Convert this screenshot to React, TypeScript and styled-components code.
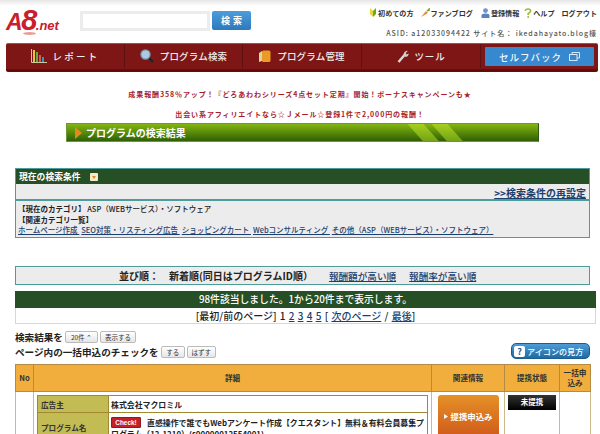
import React from "react";
import styled, { createGlobalStyle } from "styled-components";

const Global = createGlobalStyle`
  html, body { margin: 0; padding: 0; height: 434px; overflow: hidden; background: #fff; }
  body { font-family: "Noto Sans CJK JP", "Liberation Sans", sans-serif; color: #222; }
  * { box-sizing: border-box; }
  a { color: #1c3f6e; }
`;

const Page = styled.div`
  width: 600px; height: 434px; overflow: hidden;
  background: linear-gradient(#e6e6e6 0, #fff 6px);
`;
const Header = styled.header`
  display: flex; height: 43px; padding: 8px 3px 0 6px;
`;
const Logo = styled.div`
  position: relative; flex: none; width: 60px; height: 26px; display: flex; align-items: baseline; color: #c8202c;
  font-family: "Liberation Sans", sans-serif; font-style: italic; font-weight: 700; line-height: 24px; white-space: nowrap;
  &::after { content: ""; position: absolute; left: 17px; top: 24px; width: 13px; height: 3px; border-radius: 50%; background: #eb9c96; }
`;
const LogoPart = styled.span<{ $size: number; $shift: number }>`
  font-size: ${(p) => p.$size}px; letter-spacing: ${(p) => p.$shift}px;
`;
const SearchInput = styled.input`
  width: 130px; height: 20px; margin: 3px 0 0 14px; border: 3px solid #ececec; background: #fff; outline: none;
`;
const SearchButton = styled.button`
  width: 39px; height: 19px; margin: 3px 0 0 2px; border: 0; border-radius: 2px; color: #fff;
  background: linear-gradient(#4d9ddb, #2c79bb); font: 700 9px/19px "Noto Sans CJK JP", sans-serif; letter-spacing: 3px; padding: 0 0 0 3px;
`;
const HeaderInfo = styled.div`
  margin-left: auto; display: flex; flex-direction: column; align-items: flex-end;
`;
const TopLinks = styled.div`
  display: flex; height: 12px; margin-top: -1px; align-items: center;
`;
const TopLink = styled.span<{ $gap: number }>`
  display: flex; align-items: center; gap: 1px; margin-left: ${(p) => p.$gap}px; font-size: 7.1px; font-weight: 700; color: #333; line-height: 12px; white-space: nowrap;
`;
const Asid = styled.div`
  margin-top: 9px; font-size: 7px; line-height: 10px; letter-spacing: 0.96px; font-weight: 500; color: #555; white-space: nowrap;
`;
const Nav = styled.nav`
  display: grid; grid-template-columns: 119px 118px 119px 119px 1fr; height: 29px; margin: 0 2px 0 6px; border-radius: 2px;
  background: #7f1616; border-top: 1px solid #a45050; border-bottom: 3px solid #640c0c;
`;
const NavItem = styled.div<{ $spacing: number }>`
  display: flex; align-items: center; justify-content: center; gap: 6px; height: 24px; color: #eee; font-size: 9.5px; font-weight: 500;
  letter-spacing: ${(p) => p.$spacing}px; border-right: 1px solid #5f1010; white-space: nowrap;
`;
const SelfBack = styled.div`
  display: flex; align-items: center; justify-content: center; gap: 7px; height: 19px; margin: 3px 4px 0 4px; background: #3688cf; border-radius: 1px;
  color: #f2f6fa; font-size: 9.5px; font-weight: 500; letter-spacing: 1px; white-space: nowrap;
`;
const Notices = styled.div`
  display: flex; flex-direction: column; gap: 10px; padding-top: 17px; align-items: center;
`;
const Notice = styled.p`
  margin: 0; height: 10px; color: #a81c2a; font-size: 7px; line-height: 10px; font-weight: 700; letter-spacing: 0.9px; white-space: nowrap;
`;
const TitleBar = styled.h2`
  position: relative; overflow: hidden; display: flex; align-items: center; gap: 4px; width: 473px; height: 19px; margin: 4px 0 0 66px; padding-left: 8px;
  background: linear-gradient(#83b512, #2f6003); border: 1px solid #6a9a38; border-right-color: #2f5d10; color: #fff; font-size: 10px; line-height: 16px; font-weight: 700;
`;
const Stripe = styled.i<{ $left: number }>`
  position: absolute; top: 0; left: ${(p) => p.$left}px; width: 16px; height: 19px; background: linear-gradient(#a6d01c, #6d9e16); transform: skewX(42deg);
`;
const Panel = styled.section`
  margin: 26px 0 0 15px; width: 575px; border: 1px solid #4d9c9c; background: #ececec;
`;
const PanelHead = styled.div`
  display: flex; align-items: center; gap: 9px; height: 15px; padding-left: 3px; background: #264f25; color: #fff; font-size: 8.8px; font-weight: 700; line-height: 15px;
`;
const Reset = styled.div`
  height: 17px; padding-right: 3px; text-align: right; border-bottom: 2px solid #4d9c9c; font-size: 10px; line-height: 17px; font-weight: 700;
`;
const Cats = styled.div`
  height: 36px; padding: 3px 2px 0; font-size: 7.5px; line-height: 10.5px; font-weight: 500; white-space: nowrap;
  a { margin-right: 2px; }
  b { font-weight: 700; }
`;
const SortBox = styled.div`
  display: flex; align-items: center; height: 19px; width: 575px; margin: 28px 0 0 15px; padding-left: 103px; background: #ececec; border: 1px solid #4d9c9c;
  font-size: 10px; font-weight: 700; white-space: nowrap;
  a { margin-left: 16px; font-size: 9.6px; font-weight: 500; }
  a + a { margin-left: 13px; }
`;
const ResultBar = styled.div`
  height: 17px; width: 581px; margin: 6px 0 0 15px; background: #264f25; color: #fff; text-align: center; font-size: 9.8px; line-height: 17px; font-weight: 500;
`;
const Pager = styled.div`
  height: 16px; width: 581px; margin-left: 15px; border: 1px solid #c4dfe0; border-top: 0; text-align: center; font-size: 10px; line-height: 15px; font-weight: 500; white-space: nowrap;
  word-spacing: 1px;
`;
const ControlsRow = styled.div`
  display: flex; justify-content: space-between; width: 575px; margin: 6px 0 0 15px;
`;
const ControlLines = styled.div`
  display: flex; flex-direction: column; gap: 2px;
`;
const ControlLine = styled.div`
  display: flex; align-items: center; gap: 2px; height: 13px; font-size: 9.6px; font-weight: 700; white-space: nowrap;
`;
const MiniButton = styled.span<{ $w: number }>`
  display: inline-flex; align-items: center; justify-content: center; flex: none; width: ${(p) => p.$w}px; height: 12px;
  border: 1px solid #bbb; border-radius: 2px; background: linear-gradient(#fff, #e6e6e6); font-size: 6.5px; font-weight: 400; color: #333;
`;
const HelpButton = styled.div`
  display: flex; align-items: center; gap: 2px; width: 79px; height: 16px; margin-top: 13px; padding-left: 2px; border-radius: 5px; border: 1px solid #1d5d8e;
  background: linear-gradient(#4e9cd6, #1d6aa5); color: #fff; font-size: 8.1px; font-weight: 500; white-space: nowrap;
  b { display: flex; align-items: center; justify-content: center; width: 11px; height: 11px; background: #fff; color: #1d5d8e; border-radius: 2px; font-size: 9px; }
`;
const ResultTable = styled.table`
  width: 575px; margin: 5px 0 0 15px; border-collapse: collapse; table-layout: fixed;
`;
const HeadCell = styled.th`
  height: 27px; padding: 0; background: #f2ae3d; border: 1px solid #b58a45; font-size: 7.6px; line-height: 10px; font-weight: 700; color: #333;
`;
const BodyCell = styled.td`
  height: 60px; padding: 3px; vertical-align: top; border: 1px solid #cdb98a; background: #fff;
`;
const InnerTable = styled.table`
  width: 391px; border-collapse: collapse; table-layout: fixed;
`;
const InnerLabel = styled.th`
  width: 71px; padding: 0 3px; text-align: left; background: #c3bc55; border: 1px solid #a2892f; font-size: 7.6px; font-weight: 700; color: #333;
`;
const InnerValue = styled.td<{ $h: number }>`
  height: ${(p) => p.$h}px; padding: 0 2px; border: 1px solid #a2892f; font-size: 7.9px; line-height: 11px; font-weight: 700;
`;
const Check = styled.span`
  display: inline-block; width: 30px; height: 11px; margin: 0 6px 0 0; background: #c4202a; color: #fff; border: 1px solid #8d1a20; border-radius: 1px;
  font: 700 6.4px/9px "Liberation Sans", sans-serif; text-align: center; vertical-align: top;
`;
const ApplyButton = styled.div`
  display: flex; align-items: center; justify-content: center; gap: 3px; width: 61px; height: 42px; margin: 0 auto; border-radius: 3px;
  background: linear-gradient(#e59027, #d05a1b); color: #fff; font-size: 8.4px; font-weight: 700; white-space: nowrap;
`;
const Status = styled.div`
  width: 48px; height: 15px; margin: 0 auto; background: linear-gradient(#333, #000); color: #fff; text-align: center; font-size: 7.5px; line-height: 13px; font-weight: 700;
`;

const Leaf = () => (<svg width="8" height="10" viewBox="0 0 8 10"><path d="M1 0 L4 3 L4 9 L1 6Z" fill="#e8d633"/><path d="M7 0 L4 3 L4 9 L7 6Z" fill="#6aa82c"/></svg>);
const Carrot = () => (<svg width="9" height="10" viewBox="0 0 9 10"><path d="M0 9 L5 3 L7 5Z" fill="#ee8a24"/><path d="M6 3 L9 0 M6 3 L9 2" stroke="#7aa62c" strokeWidth="1.2"/></svg>);
const Person = () => (<svg width="9" height="10" viewBox="0 0 9 10"><circle cx="4.5" cy="2.6" r="2.4" fill="#6d93c9"/><path d="M0.5 10 V7.5 Q0.5 5.5 4.5 5.5 Q8.5 5.5 8.5 7.5 V10Z" fill="#5b83bd"/></svg>);
const Question = () => (<svg width="8" height="10" viewBox="0 0 8 10"><path d="M1.2 3 Q1.5 1 4 1 Q6.6 1 6.6 3 Q6.6 4.4 4.2 5.4 V7" fill="none" stroke="#9dbb3a" strokeWidth="1.6"/><circle cx="4.2" cy="9" r="1" fill="#9dbb3a"/></svg>);
const Chart = () => (<svg width="16" height="14" viewBox="0 0 16 14"><path d="M0.5 0 V13.5 H16" fill="none" stroke="#c9c9a0"/><rect x="2" y="1" width="2" height="12" fill="#e7c23a"/><rect x="5" y="3" width="2" height="10" fill="#69a84a"/><rect x="8" y="6" width="2" height="7" fill="#d45a4a"/><rect x="11" y="8" width="2" height="5" fill="#3f8fd0"/></svg>);
const Lens = () => (<svg width="14" height="14" viewBox="0 0 14 14"><path d="M8 8 L13 13" stroke="#222" strokeWidth="2.2"/><circle cx="5.5" cy="5.5" r="4.6" fill="#a9cce6" stroke="#7b98ad" strokeWidth="1.2"/></svg>);
const Book = () => (<svg width="12" height="13" viewBox="0 0 12 13"><path d="M0 3 L3 1 V11 L0 12Z" fill="#ddd2a4"/><rect x="3" y="0.5" width="8.5" height="11.5" rx="1.5" fill="#eb9a24"/></svg>);
const Wrench = () => (<svg width="12" height="13" viewBox="0 0 12 13"><path d="M1.5 12 L7.5 5" stroke="#d9d9d9" strokeWidth="2.4"/><path d="M6.5 5 Q6.5 1 11 0.8 L8.8 3 L9.5 4.5 L11.7 3.4 Q11.4 7.2 7.8 6.8Z" fill="#cfcfcf"/></svg>);
const Windows = () => (<svg width="11" height="9" viewBox="0 0 11 9"><path d="M3 2.5 V0.5 H10.5 V6 H8" fill="none" stroke="#d6e6f4"/><rect x="0.5" y="2.5" width="7.5" height="6" fill="none" stroke="#d6e6f4"/></svg>);
const Arrow = () => (<svg width="7" height="12" viewBox="0 0 7 12"><path d="M0 0 L7 6 L0 12Z" fill="#e08a22"/></svg>);
const Toggle = () => (<svg width="8" height="8" viewBox="0 0 8 8"><rect width="8" height="8" rx="1" fill="#f4eccc"/><path d="M2 3 H6 L4 6Z" fill="#e8862a"/></svg>);
const SmallArrow = () => (<svg width="4" height="5" viewBox="0 0 4 5"><path d="M0 0 L4 2.5 L0 5Z" fill="#fff"/></svg>);

export default function App() {
  return (
    <Page>
      <Global />
      <Header>
        <Logo>
          <LogoPart $size={23} $shift={-1.5}>A</LogoPart>
          <LogoPart $size={29} $shift={-1.5}>8</LogoPart>
          <LogoPart $size={13} $shift={0}>.net</LogoPart>
        </Logo>
        <SearchInput aria-label="検索" />
        <SearchButton>検索</SearchButton>
        <HeaderInfo>
          <TopLinks>
            <TopLink $gap={0}><Leaf />初めての方</TopLink>
            <TopLink $gap={7}><Carrot />ファンブログ</TopLink>
            <TopLink $gap={8}><Person />登録情報</TopLink>
            <TopLink $gap={5}><Question />ヘルプ</TopLink>
            <TopLink $gap={7}>ログアウト</TopLink>
          </TopLinks>
          <Asid>ASID: a12033094422 サイト名： ikedahayato.blog様</Asid>
        </HeaderInfo>
      </Header>
      <Nav>
        <NavItem $spacing={2.2}><Chart />レポート</NavItem>
        <NavItem $spacing={0.2}><Lens />プログラム検索</NavItem>
        <NavItem $spacing={0.2}><Book />プログラム管理</NavItem>
        <NavItem $spacing={0.8}><Wrench />ツール</NavItem>
        <SelfBack>セルフバック<Windows /></SelfBack>
      </Nav>
      <Notices>
        <Notice>成果報酬358％アップ！『どろあわわシリーズ4点セット定期』開始！ボーナスキャンペーンも★</Notice>
        <Notice>出会い系アフィリエイトなら☆Ｊメール☆登録1件で2,000円の報酬！</Notice>
      </Notices>
      <TitleBar><Arrow />プログラムの検索結果<Stripe $left={349} /><Stripe $left={373} /></TitleBar>
      <Panel>
        <PanelHead>現在の検索条件<Toggle /></PanelHead>
        <Reset><a href="#">&gt;&gt;検索条件の再設定</a></Reset>
        <Cats>
          <b>【現在のカテゴリ】</b> ASP（WEBサービス）・ソフトウェア<br />
          <b>【関連カテゴリ一覧】</b><br />
          <a href="#">ホームページ作成 </a> <a href="#">SEO対策・リスティング広告 </a> <a href="#">ショッピングカート </a> <a href="#">Webコンサルティング </a> <a href="#">その他（ASP（WEBサービス）・ソフトウェア） </a>
        </Cats>
      </Panel>
      <SortBox>並び順：　新着順(同日はプログラムID順）<a href="#">報酬額が高い順</a><a href="#">報酬率が高い順</a></SortBox>
      <ResultBar>98件該当しました。1から20件まで表示します。</ResultBar>
      <Pager>[最初/前のページ] 1 <a href="#">2</a> <a href="#">3</a> <a href="#">4</a> <a href="#">5</a> [ <a href="#">次のページ</a> / <a href="#">最後</a>]</Pager>
      <ControlsRow>
        <ControlLines>
          <ControlLine>検索結果を <MiniButton $w={33}>20件 ⌃</MiniButton><MiniButton $w={36}>表示する</MiniButton></ControlLine>
          <ControlLine>ページ内の一括申込のチェックを <MiniButton $w={24}>する</MiniButton><MiniButton $w={29}>はずす</MiniButton></ControlLine>
        </ControlLines>
        <HelpButton><b>?</b>アイコンの見方</HelpButton>
      </ControlsRow>
      <ResultTable>
        <colgroup>
          <col width="18" /><col width="398" /><col width="73" /><col width="55" /><col width="31" />
        </colgroup>
        <thead>
          <tr>
            <HeadCell>No</HeadCell><HeadCell>詳細</HeadCell><HeadCell>関連情報</HeadCell><HeadCell>提携状態</HeadCell><HeadCell>一括申<br />込み</HeadCell>
          </tr>
        </thead>
        <tbody>
          <tr>
            <BodyCell />
            <BodyCell>
              <InnerTable>
                <tbody>
                  <tr><InnerLabel>広告主</InnerLabel><InnerValue $h={17}>株式会社マクロミル</InnerValue></tr>
                  <tr><InnerLabel>プログラム名</InnerLabel><InnerValue $h={30}><Check>Check!</Check>直感操作で誰でもWebアンケート作成【クエスタント】無料＆有料会員募集プログラム（12-1210）(s00000012554001)</InnerValue></tr>
                </tbody>
              </InnerTable>
            </BodyCell>
            <BodyCell><ApplyButton><SmallArrow />提携申込み</ApplyButton></BodyCell>
            <BodyCell><Status>未提携</Status></BodyCell>
            <BodyCell />
          </tr>
        </tbody>
      </ResultTable>
    </Page>
  );
}
